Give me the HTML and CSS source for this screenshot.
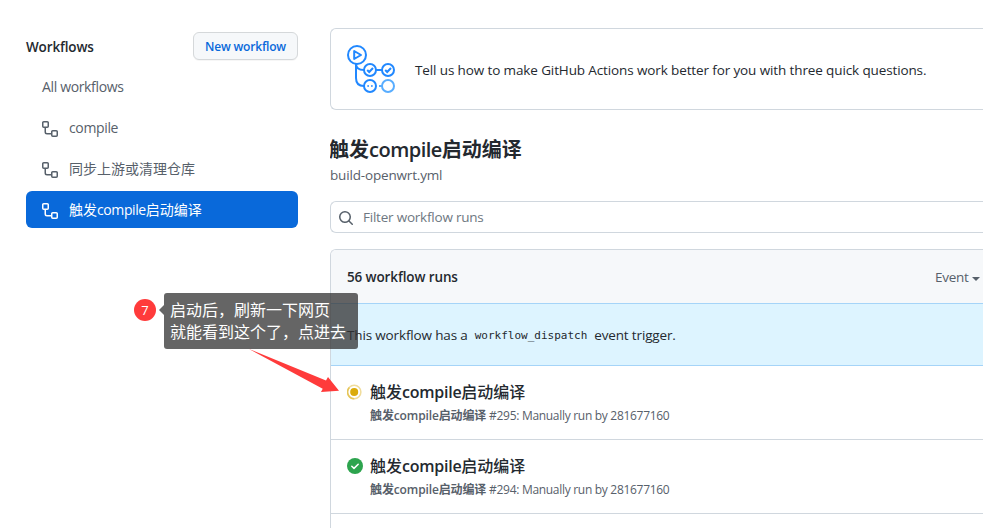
FILE: index.html
```html
<!DOCTYPE html>
<html lang="zh-CN">
<head>
<meta charset="utf-8">
<title>Workflow runs</title>
<link rel="stylesheet" href="styles.css">
</head>
<body>
<svg width="0" height="0" class="sprite" aria-hidden="true">
  <symbol id="workflow" viewBox="0 0 16 16"><path fill-rule="evenodd" d="M0 1.75C0 .784.784 0 1.75 0h3.5C6.216 0 7 .784 7 1.75v3.5A1.75 1.75 0 0 1 5.25 7H4v4a1 1 0 0 0 1 1h4v-1.25C9 9.784 9.784 9 10.75 9h3.5c.966 0 1.75.784 1.75 1.75v3.5A1.75 1.75 0 0 1 14.25 16h-3.5A1.75 1.75 0 0 1 9 14.25v-.75H5A2.5 2.5 0 0 1 2.5 11V7h-.75A1.75 1.75 0 0 1 0 5.25Zm1.75-.25a.25.25 0 0 0-.25.25v3.5c0 .138.112.25.25.25h3.5a.25.25 0 0 0 .25-.25v-3.5a.25.25 0 0 0-.25-.25Zm9 9a.25.25 0 0 0-.25.25v3.5c0 .138.112.25.25.25h3.5a.25.25 0 0 0 .25-.25v-3.5a.25.25 0 0 0-.25-.25Z"/></symbol>
</svg>
<div class="page">
  <aside class="sidebar">
    <div class="side-head"><h2>Workflows</h2><button class="new">New workflow</button></div>
    <nav>
      <a class="item all">All workflows</a>
      <a class="item"><svg class="ico"><use href="#workflow"/></svg><span>compile</span></a>
      <a class="item"><svg class="ico"><use href="#workflow"/></svg><span class="cjk">同步上游或清理仓库</span></a>
      <a class="item active"><svg class="ico"><use href="#workflow"/></svg><span class="cjk">触发<span>compile</span>启动编译</span></a>
    </nav>
  </aside>
  <main>
    <section class="survey">
      <svg class="logo" viewBox="0 0 48 48" fill="none" stroke="#2188ff" stroke-width="2">
        <circle cx="10" cy="10" r="9"/>
        <path d="M7.2 6v8l6.8-4z" stroke-linejoin="round"/>
        <path d="M9 19v14q0 8 8 8M9 19q0 6 8 6M29 25h6"/>
        <circle cx="23" cy="25" r="6"/><circle cx="41" cy="25" r="6"/>
        <path d="M20.2 25l2 2 3.8-4M38.2 25l2 2 3.8-4"/>
        <circle cx="23" cy="41" r="6"/>
        <path d="M20.300 41h1.700M24 41h1.700" stroke-width="1.6"/>
        <g stroke="#58adff"><circle cx="41" cy="41" r="6"/><path d="M32 41h3"/></g>
      </svg>
      <p>Tell us how to make GitHub Actions work better for you with three quick questions.</p>
    </section>
    <h1>触发<span>compile</span>启动编译</h1>
    <p class="file">build-openwrt.yml</p>
    <div class="search">
      <svg class="ico" viewBox="0 0 16 16"><path d="M10.68 11.74a6 6 0 0 1-7.922-8.982 6 6 0 0 1 8.982 7.922l3.04 3.04a.749.749 0 0 1-1.06 1.06ZM11.5 7a4.499 4.499 0 1 0-8.997 0A4.499 4.499 0 0 0 11.5 7Z"/></svg>
      <span>Filter workflow runs</span>
    </div>
    <section class="runs">
      <header><strong>56 workflow runs</strong><span class="event">Event<i></i></span></header>
      <div class="notice"><span>This workflow has a</span><code>workflow_dispatch</code><span>event trigger.</span></div>
      <article>
        <svg class="state" viewBox="0 0 16 16"><circle cx="7.200" cy="8" r="6.700" fill="#fff" stroke="#f0dc9b" stroke-width="1.5"/><path d="M7.200 14.700A6.700 6.700 0 0 1 2.400 3.400" fill="none" stroke="#e6c65a" stroke-width="1.5"/><circle cx="7.200" cy="8" r="4" fill="#dbab0a"/></svg>
        <div><h3>触发<span>compile</span>启动编译</h3><p><b>触发compile启动编译</b> <span>#295: Manually run by 281677160</span></p></div>
      </article>
      <article>
        <svg class="state" viewBox="0 0 16 16"><circle cx="8" cy="8" r="8" fill="#2da44e"/><path d="M4.800 8.300l2.200 2.100 4.200-4.200" fill="none" stroke="#fff" stroke-width="1.5" stroke-linecap="round" stroke-linejoin="round"/></svg>
        <div><h3>触发<span>compile</span>启动编译</h3><p><b>触发compile启动编译</b> <span>#294: Manually run by 281677160</span></p></div>
      </article>
    </section>
  </main>
</div>
<span class="step">7</span>
<div class="tip">启动后，刷新一下网页<br>就能看到这个了，点进去</div>
<svg class="arrow" viewBox="0 0 92 48"><path d="M1 0L78 31.500 80 28 91 41.700 73 43 74.700 39.700Z" fill="#ff3b3b"/></svg>
</body>
</html>
```
FILE: styles.css
```css
* { box-sizing: border-box; }
body { margin: 0; width: 983px; height: 528px; overflow: hidden; position: relative; background: #fff; color: #24292f; font: 13.5px/20px "Open Sans", "Noto Sans CJK SC", sans-serif; letter-spacing: -.12px; white-space: nowrap; }
h1, h2, h3, p { margin: 0; }
.sprite { position: absolute; }
.page { display: flex; gap: 32px; height: 528px; overflow: hidden; padding: 28px 0 0 26px; }
.sidebar { width: 272px; flex: none; padding-top: 4px; }
.side-head { display: flex; align-items: center; justify-content: space-between; height: 28px; }
h2 { font-size: 13.5px; font-weight: 550; line-height: 20px; padding-top: 2px; letter-spacing: -.15px; }
.new { width: 105px; height: 28px; padding: 1px 0 0; border: 1px solid #d5d8da; border-radius: 6px; background: #f6f8fa; color: #0969da; font: 550 12px/20px "Open Sans", sans-serif; letter-spacing: -.2px; box-shadow: 0 1px 0 #1b1f240a; }
nav { display: flex; flex-direction: column; gap: 4px; padding-top: 8px; }
.item { display: flex; align-items: center; gap: 11px; height: 37px; padding: 0 16px; border-radius: 6px; color: #57606a; font-size: 14px; letter-spacing: -.35px; }
.item .ico { position: relative; top: 1px; }
.item .cjk { letter-spacing: 0; }
.item .cjk span { letter-spacing: -.4px; }
.active { background: #0969da; color: #fff; }
.ico { width: 16px; height: 16px; fill: currentColor; flex: none; }
main { width: 653px; flex: none; display: flex; flex-direction: column; overflow: hidden; }
.survey { flex: none; height: 82px; display: flex; align-items: center; gap: 20px; padding: 0 16px; border: 1px solid #d0d7de; border-right: 0; border-radius: 6px 0 0 6px; margin-bottom: 25px; }
.survey p { padding-top: 1px; }
.logo { width: 48px; height: 48px; }
h1 { margin-left: -1px; font-size: 20px; line-height: 30px; font-weight: 600; letter-spacing: 0; }
h1 span { letter-spacing: -.5px; font-weight: 550; }
.file { color: #57606a; line-height: 20px; letter-spacing: -.17px; }
.search { flex: none; height: 32px; margin-top: 16px; padding: 0 7px; display: flex; align-items: center; gap: 9px; border: 1px solid #d0d7de; border-right: 0; border-radius: 6px 0 0 6px; color: #6e7781; letter-spacing: -.22px; }
.search .ico { color: #57606a; position: relative; top: 1px; }
.runs { flex: 1; margin-top: 16px; border: 1px solid #d0d7de; border-width: 1px 0 0 1px; border-radius: 6px 0 0 0; overflow: hidden; }
.runs header { height: 53px; padding: 1px 0 0 16px; display: flex; align-items: center; background: #f6f8fa; }
.runs header strong { font-weight: 550; width: 588px; }
.event { display: flex; align-items: center; gap: 3px; color: #57606a; letter-spacing: -.25px; }
.event i { border: 4px solid transparent; border-top-color: currentColor; border-bottom: 0; margin-top: 3px; }
.notice { height: 63px; padding-left: 16px; display: flex; align-items: center; gap: 7px; background: #ddf4ff; border: solid #a5d4f8; border-width: 1px 0; letter-spacing: -.15px; }
code { font: 11px/20px "DejaVu Sans Mono", monospace; letter-spacing: 0; padding-top: 2px; }
article { height: 74px; padding: 14px 16px 0; display: flex; gap: 7px; border-bottom: 1px solid #d0d7de; }
.state { width: 16px; height: 16px; margin-top: 4px; flex: none; }
h3 { font-size: 16px; line-height: 24px; font-weight: 500; letter-spacing: 0; }
h3 span { letter-spacing: -.25px; font-weight: 550; }
article p { font-size: 12px; line-height: 18px; margin-top: 3px; color: #57606a; letter-spacing: -.3px; }
article b { font-weight: 600; letter-spacing: -.12px; }
.step { position: absolute; left: 134px; top: 299px; width: 22px; height: 22px; border-radius: 50%; background: #ff3b3b; color: #fff; font: 13px/22px "Open Sans", sans-serif; text-align: center; }
.tip { position: absolute; left: 164px; top: 293px; width: 194px; height: 56px; padding: 6px; border-radius: 3px; background: rgba(50,50,50,.75); color: #fff; font-size: 16px; line-height: 22px; letter-spacing: 0; }
.tip::before { content: ""; position: absolute; left: -5px; top: 12px; border: 5px solid transparent; border-right-color: rgba(50,50,50,.75); border-left: 0; }
.arrow { position: absolute; left: 248px; top: 349px; width: 92px; height: 48px; }
```
